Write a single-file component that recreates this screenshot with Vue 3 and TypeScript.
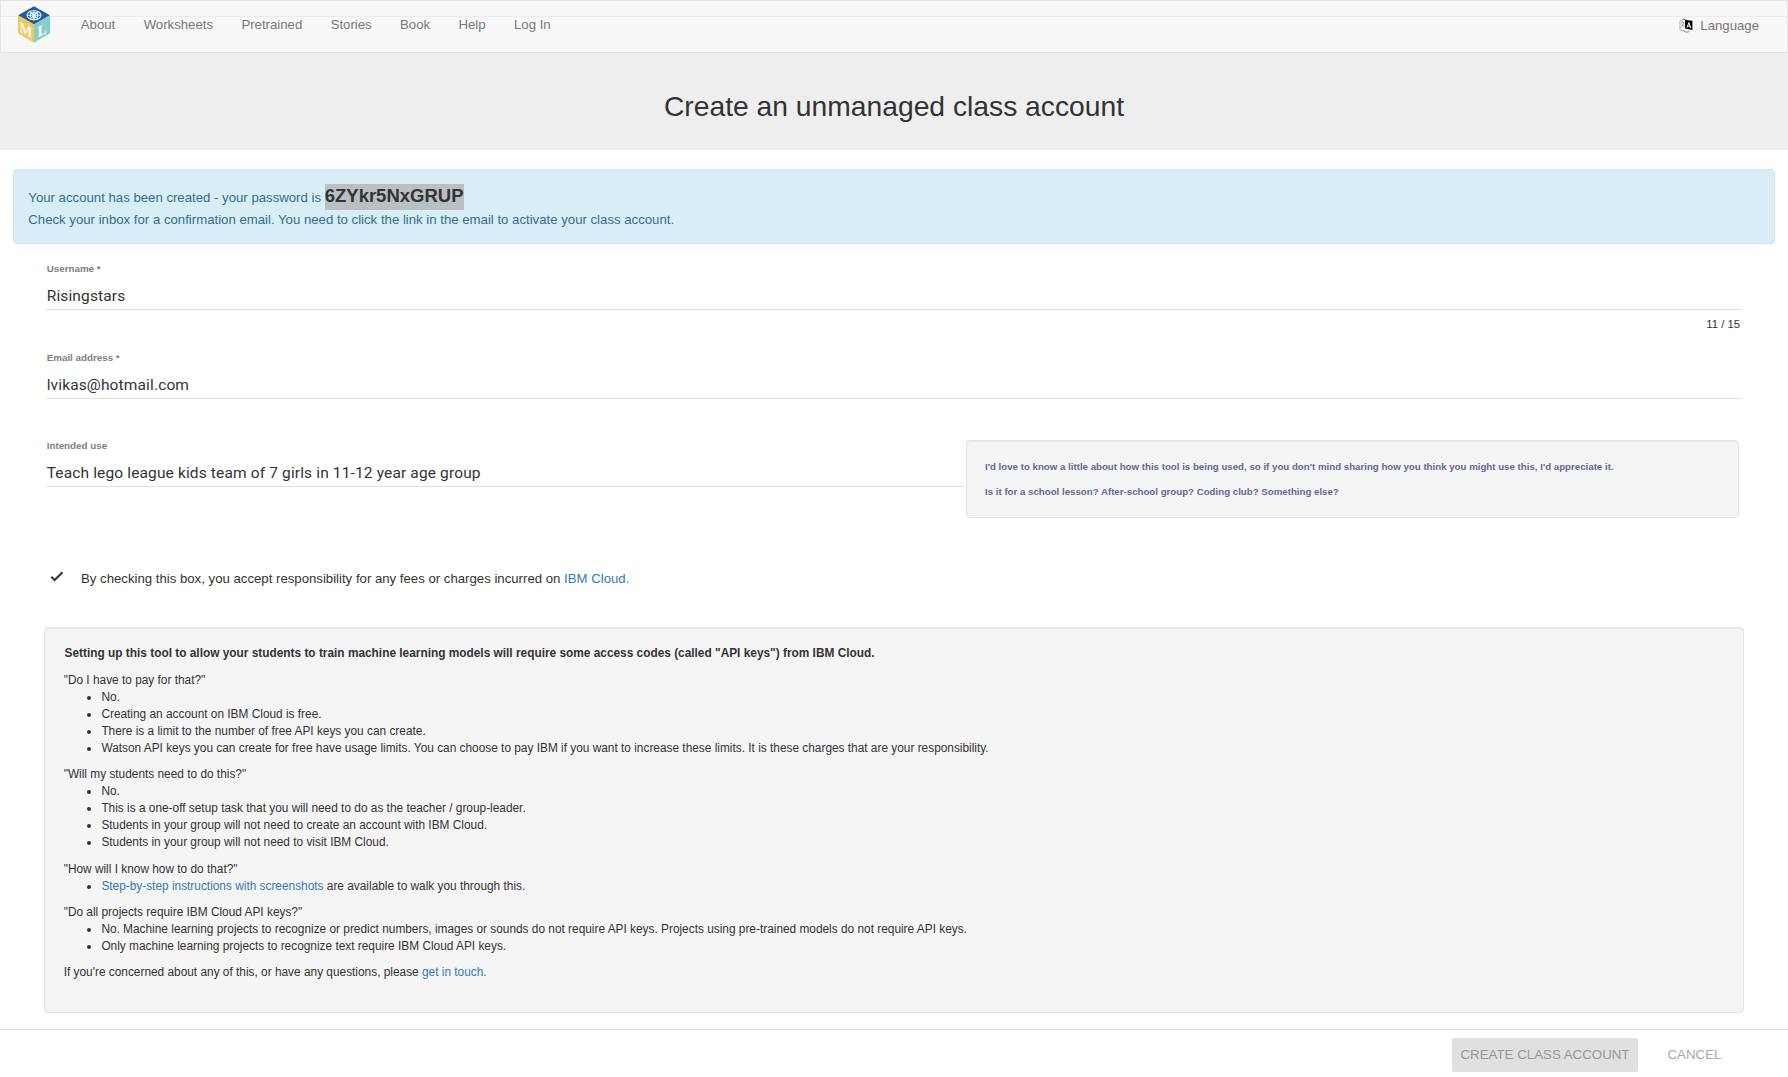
<script setup lang="ts">
const navLinks: string[] = ['About', 'Worksheets', 'Pretrained', 'Stories', 'Book', 'Help', 'Log In']

interface Faq {
  question: string
  answers: { link?: string; text: string }[]
}

const faqs: Faq[] = [
  {
    question: '"Do I have to pay for that?"',
    answers: [
      { text: 'No.' },
      { text: 'Creating an account on IBM Cloud is free.' },
      { text: 'There is a limit to the number of free API keys you can create.' },
      { text: 'Watson API keys you can create for free have usage limits. You can choose to pay IBM if you want to increase these limits. It is these charges that are your responsibility.' },
    ],
  },
  {
    question: '"Will my students need to do this?"',
    answers: [
      { text: 'No.' },
      { text: 'This is a one-off setup task that you will need to do as the teacher / group-leader.' },
      { text: 'Students in your group will not need to create an account with IBM Cloud.' },
      { text: 'Students in your group will not need to visit IBM Cloud.' },
    ],
  },
  {
    question: '"How will I know how to do that?"',
    answers: [{ link: 'Step-by-step instructions with screenshots', text: ' are available to walk you through this.' }],
  },
  {
    question: '"Do all projects require IBM Cloud API keys?"',
    answers: [
      { text: 'No. Machine learning projects to recognize or predict numbers, images or sounds do not require API keys. Projects using pre-trained models do not require API keys.' },
      { text: 'Only machine learning projects to recognize text require IBM Cloud API keys.' },
    ],
  },
]
</script>

<template>
  <div class="page">
    <nav class="navbar">
      <svg class="logo" viewBox="0 0 32 38" width="32" height="38">
        <polygon points="16,0.3 32,9.2 16,18.4 0,9.2" fill="#1f5f9f" />
        <polygon points="0,9.2 16,18.4 16,36.8 0,27.3" fill="#f0c75e" />
        <polygon points="32,9.2 16,18.4 16,36.8 32,27.3" fill="#86cdcb" />
        <g fill="none" stroke="#e6f1fa" stroke-width="1.1">
          <ellipse cx="16" cy="9.3" rx="7" ry="4.6" />
          <path d="M16 4.7v9.2M9.2 9.3h13.6M12 5.6l8 7.4M20 5.6l-8 7.4M12.2 7.7L16 6.4l3.8 1.3v3.2L16 12.3l-3.8-1.4z" />
        </g>
        <text class="letter" transform="matrix(1 0.5 0 1 1.6 25.8)" textLength="12.8" lengthAdjust="spacingAndGlyphs">M</text>
        <text class="letter" transform="matrix(1 -0.5 0 1 19.8 31.2)" textLength="8.8" lengthAdjust="spacingAndGlyphs">L</text>
      </svg>
      <a v-for="item in navLinks" :key="item" class="nav-link">{{ item }}</a>
      <a class="language">
        <svg viewBox="0 0 14 15" width="14" height="15">
          <path d="M5.8 1.2L1 2.6v9.2l5 .9" fill="#fff" stroke="#999" stroke-width=".8" />
          <path d="M2 5l3.2-.6M3.6 3.2v1.4M5 5L2.2 9.6M2.6 6l2.8 3.2" fill="none" stroke="#888" stroke-width=".8" />
          <path d="M4.2 .6L7 2l6.4.8v9.2L6 10.6V2.4z" fill="#000" />
          <path d="M8 9.6l1.9-5 1.9 5.4M8.6 8l2.8.4" fill="none" stroke="#fff" stroke-width="1" />
          <path d="M4.6 13.2c2 1.2 4.2 1 5.6.2" fill="none" stroke="#777" stroke-width=".9" />
        </svg>
        <span>Language</span>
      </a>
    </nav>

    <header class="title-bar"><h1>Create an unmanaged class account</h1></header>

    <section class="alert">
      <div class="created">Your account has been created - your password is <strong>6ZYkr5NxGRUP</strong></div>
      <div class="confirm">Check your inbox for a confirmation email. You need to click the link in the email to activate your class account.</div>
    </section>

    <form class="form">
      <div class="field">
        <label>Username *</label>
        <div class="value">Risingstars</div>
        <div class="counter">11 / 15</div>
      </div>
      <div class="field">
        <label>Email address *</label>
        <div class="value">lvikas@hotmail.com</div>
      </div>
      <div class="use-row">
        <div class="field use">
          <label>Intended use</label>
          <div class="value">Teach lego league kids team of 7 girls in 11-12 year age group</div>
        </div>
        <aside class="well hint">
          <p>I'd love to know a little about how this tool is being used, so if you don't mind sharing how you think you might use this, I'd appreciate it.</p>
          <p>Is it for a school lesson? After-school group? Coding club? Something else?</p>
        </aside>
      </div>
      <div class="accept">
        <svg viewBox="0 0 14 11" width="14" height="11"><path d="M1.3 5.8l3.3 3.2 7.9-7.7" fill="none" stroke="#333" stroke-width="2" /></svg>
        <span>By checking this box, you accept responsibility for any fees or charges incurred on <a>IBM Cloud.</a></span>
      </div>
      <section class="well info">
        <h2>Setting up this tool to allow your students to train machine learning models will require some access codes (called "API keys") from IBM Cloud.</h2>
        <div v-for="faq in faqs" :key="faq.question" class="faq">
          <div>{{ faq.question }}</div>
          <ul>
            <li v-for="answer in faq.answers" :key="answer.text"><a v-if="answer.link">{{ answer.link }}</a>{{ answer.text }}</li>
          </ul>
        </div>
        <div>If you're concerned about any of this, or have any questions, please <a>get in touch.</a></div>
      </section>
    </form>

    <footer class="actions">
      <button class="create" disabled>CREATE CLASS ACCOUNT</button>
      <button class="cancel">CANCEL</button>
    </footer>
  </div>
</template>

<style>
body {
  margin: 0;
  background: #fff;
}
</style>

<style scoped>
.page,
.page * {
  box-sizing: border-box;
}
.page {
  display: flex;
  flex-direction: column;
  height: 1077px;
  overflow: hidden;
  font-family: "Liberation Sans", Arial, sans-serif;
  font-size: 13.2px;
  color: #333;
}
a {
  color: #337ab7;
}
.navbar {
  position: relative;
  display: flex;
  align-items: flex-start;
  flex: none;
  height: 53px;
  padding: 0 28px 0 17px;
  background: #f8f8f8;
  border: 1px solid #e4e4e4;
}
.navbar::before {
  content: "";
  position: absolute;
  left: 0;
  right: 0;
  top: 15px;
  height: 1px;
  background: #ebebeb;
}
.logo {
  position: relative;
  flex: none;
  margin: 5px 16.6px 0 0;
}
.letter {
  font: bold 15px "Liberation Serif", serif;
  fill: #fff;
}
.nav-link {
  padding: 0 14.2px;
  line-height: 47px;
  color: #777;
}
.language {
  display: flex;
  align-items: center;
  gap: 7px;
  height: 48px;
  margin-left: auto;
  color: #777;
}
.title-bar {
  flex: none;
  height: 97px;
  padding-top: 33px;
  background: #eee;
}
h1 {
  margin: 0;
  font-size: 28.25px;
  font-weight: 400;
  line-height: 40px;
  text-align: center;
}
.alert {
  flex: none;
  height: 75px;
  margin: 19px 13px 0;
  padding: 14px 14.3px;
  background: #d9edf7;
  border: 1px solid #c9e6ec;
  border-radius: 4px;
  color: #31708f;
}
.created {
  height: 26px;
  line-height: 24px;
  white-space: nowrap;
}
.created strong {
  display: inline-block;
  height: 26px;
  font-size: 18.5px;
  color: #333;
  background: #b8c0c4;
}
.confirm {
  line-height: 19px;
}
.form {
  flex: none;
  height: 785px;
  padding: 18px 44px 0;
}
.field {
  height: 88.5px;
  margin: 0 2px;
}
.field label {
  display: block;
  padding-left: 0.7px;
  line-height: 14px;
  font-size: 9.8px;
  font-weight: 700;
  color: #808080;
}
.value {
  margin-top: 10px;
  height: 24px;
  padding-left: 0.7px;
  border-bottom: 1px solid #e0e0e0;
  font: 15.5px/20px Roboto, sans-serif;
  letter-spacing: 0.14px;
}
.counter {
  margin-top: 6px;
  padding-right: 2px;
  font-size: 11.3px;
  line-height: 16px;
  text-align: right;
}
.use-row {
  display: flex;
  gap: 2px;
}
.use {
  width: 918px;
  margin-right: 0;
}
.well {
  background: #f5f5f5;
  border: 1px solid #e3e3e3;
  border-radius: 4px;
  box-shadow: inset 0 1px 1px rgba(0, 0, 0, 0.05);
}
.hint {
  flex: 1;
  height: 78px;
  margin: 1px 5px 0 0;
  padding: 19px 18px 0;
  font-size: 9.7px;
  font-weight: 700;
  color: #666699;
}
.hint p {
  margin: 0 0 11px;
  line-height: 14px;
}
.accept {
  display: flex;
  height: 20px;
  margin: 41px 0 38px 6px;
  line-height: 19px;
}
.accept svg {
  margin: 2px 17px 0 0;
}
.info {
  height: 386px;
  padding: 17px 18.7px;
  font-size: 11.875px;
  line-height: 17px;
}
.info h2 {
  margin: 0 0 10.7px 0.9px;
  font-size: 11.875px;
  line-height: 17px;
}
.faq {
  margin-bottom: 9.3px;
}
ul {
  margin: 0;
  padding-left: 37.7px;
}
.actions {
  display: flex;
  align-items: flex-start;
  justify-content: flex-end;
  flex: 1;
  gap: 15px;
  padding: 8px 52px 0 0;
  border-top: 1px solid #dcdcdc;
}
button {
  height: 34px;
  padding: 0;
  border: 0;
  border-radius: 2px;
  font: 13.3px/34px "Liberation Sans", Arial, sans-serif;
}
.create {
  width: 186px;
  background: #e0e0e0;
  color: #979797;
}
.cancel {
  width: 83px;
  background: transparent;
  color: #a9a9a9;
}
</style>
